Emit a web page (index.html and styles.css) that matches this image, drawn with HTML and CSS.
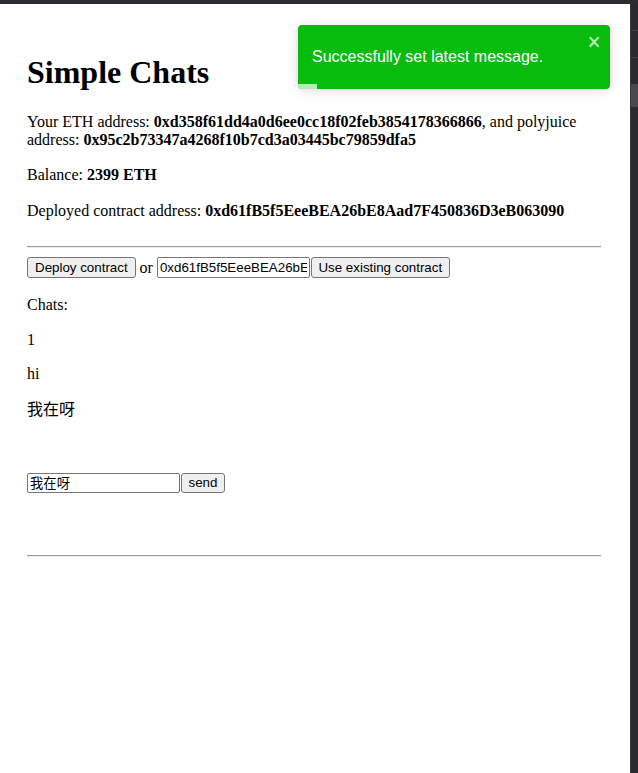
FILE: index.html
```html
<!DOCTYPE html>
<html lang="en">
<head>
<meta charset="utf-8">
<title>Simple Chats</title>
<link rel="stylesheet" href="styles.css">
</head>
<body>
<div class="window">
  <div class="topbar"></div>
  <div class="main">
    <div class="page">
      <h1 class="title">Simple Chats</h1>
      <p class="line">Your ETH address: <b>0xd358f61dd4a0d6ee0cc18f02feb3854178366866</b>, and polyjuice address: <b>0x95c2b73347a4268f10b7cd3a03445bc79859dfa5</b></p>
      <p class="line">Balance: <b>2399 ETH</b></p>
      <p class="line line-deployed">Deployed contract address: <b>0xd61fB5f5EeeBEA26bE8Aad7F450836D3eB063090</b></p>
      <hr class="rule rule-top">
      <div class="controls"><button class="btn btn-wide">Deploy contract</button> or <input class="field" type="text" value="0xd61fB5f5EeeBEA26bE8Aad7F450836D3eB063090"><button class="btn">Use existing contract</button></div>
      <p class="line chats-label">Chats:</p>
      <p class="line">1</p>
      <p class="line">hi</p>
      <p class="line line-cjk">我在呀</p>
      <div class="composer"><input class="field" type="text" value="我在呀"><button class="btn">send</button></div>
      <hr class="rule rule-bottom">
    </div>
    <div class="rail">
      <div class="seg seg-a"></div>
      <div class="seg seg-b"></div>
      <div class="seg seg-c"></div>
      <div class="seg seg-d"></div>
      <div class="seg seg-e"></div>
    </div>
  </div>
  <div class="toast">
    <div class="toast-body">Successfully set latest message.</div>
    <svg class="toast-close" width="14" height="16" viewBox="0 0 14 16" aria-hidden="true"><path fill="#fff" fill-rule="evenodd" d="M7.71 8.23l3.75 3.75-1.48 1.48-3.75-3.75-3.75 3.75L1 11.46l3.75-3.75L1 3.96 2.48 2.5l3.75 3.75L9.98 2.5l1.48 1.48-3.75 3.75z"/></svg>
    <div class="toast-progress"></div>
  </div>
</div>
</body>
</html>
```
FILE: styles.css
```css
html, body {
  margin: 0;
  padding: 0;
  background: #2b2c30;
}
.window {
  position: relative;
  width: 638px;
  height: 773px;
  display: flex;
  flex-direction: column;
  overflow: hidden;
}
.topbar {
  height: 4px;
  background: #2c2d31;
  flex: none;
}
.main {
  flex: 1;
  display: flex;
}
.page {
  flex: 1;
  background: #fff;
  padding: 50px 29px 0 27px;
  font-family: "Liberation Serif", "Noto Sans CJK SC", serif;
  font-size: 16px;
  line-height: 1.15;
  color: #000;
}
.title {
  font-size: 32px;
  font-weight: bold;
  margin: 0 0 22px;
  line-height: 1.15;
}
.line {
  margin: 16px 0;
}
.line-deployed {
  margin-top: 18px;
}
.line-cjk {
  margin-top: 17px;
}
.rule {
  border: none;
  border-top: 1px solid #9a9a9a;
  border-bottom: 1px solid #eeeeee;
  height: 0;
  margin: 8px 0;
}
.rule-top {
  margin-top: 26px;
}
.rule-bottom {
  margin-top: 62px;
}
.controls {
  height: 21px;
  line-height: 21px;
  margin-top: 9px;
}
.chats-label {
  margin-top: 18px;
}
.btn {
  font-family: "Liberation Sans", Arial, sans-serif;
  font-size: 13.33px;
  height: 21px;
  padding: 0 6.5px;
  margin: 0;
  background: #efefef;
  border: 1px solid #767676;
  border-radius: 3px;
  color: #000;
  vertical-align: top;
}
.btn-wide {
  padding: 0 7px;
}
.field {
  font-family: "Liberation Sans", Arial, "Noto Sans CJK SC", sans-serif;
  font-size: 13.33px;
  box-sizing: border-box;
  width: 153px;
  height: 20px;
  padding: 1px 2px;
  margin: 0 1px 0 0;
  border: 1px solid #767676;
  border-radius: 2px;
  color: #000;
  background: #fff;
  vertical-align: top;
}
.controls .field {
  height: 21px;
}
.composer {
  margin-top: 54px;
  height: 20px;
}
.composer .btn {
  height: 20px;
}
.rail {
  width: 7px;
  flex: none;
  display: flex;
  flex-direction: column;
  background: #2a2b2f;
  border-left: 1px solid #36373a;
}
.seg {
  border-bottom: 1px solid #3f4043;
}
.seg-a { height: 26px; }
.seg-b { height: 26px; }
.seg-c { height: 26px; border-bottom: none; }
.seg-d { height: 23px; background: #4a4a4c; border-bottom: none; }
.seg-e { flex: 1; border-bottom: none; }
.toast {
  position: absolute;
  top: 25px;
  left: 298px;
  width: 312px;
  min-height: 64px;
  box-sizing: border-box;
  padding: 8px;
  background: #07bc0c;
  border-radius: 4px;
  box-shadow: 0 1px 10px 0 rgba(0,0,0,.1), 0 2px 15px 0 rgba(0,0,0,.05);
  display: flex;
  justify-content: space-between;
  overflow: hidden;
}
.toast-body {
  margin: auto 0;
  padding: 6px;
  font-family: "Liberation Sans", Arial, sans-serif;
  font-size: 16px;
  color: #fff;
}
.toast-close {
  flex: none;
  opacity: 0.7;
  align-self: flex-start;
  margin-top: 1px;
}
.toast-progress {
  position: absolute;
  left: 0;
  bottom: 0;
  width: 19px;
  height: 5px;
  background: rgba(255,255,255,.7);
}
```
